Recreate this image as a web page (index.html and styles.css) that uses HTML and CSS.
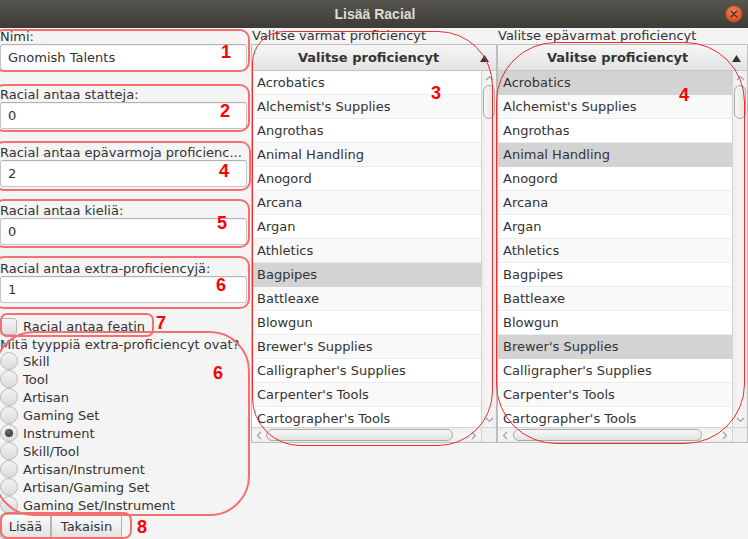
FILE: index.html
```html
<!DOCTYPE html>
<html lang="fi">
<head>
<meta charset="utf-8">
<title>Lisää Racial</title>
<link rel="stylesheet" href="styles.css">
</head>
<body>
<div class="window">
  <header class="titlebar">
    <span></span>
    <span class="title">Lisää Racial</span>
    <span class="close">
      <svg width="18" height="18" viewBox="0 0 18 18">
        <defs>
          <radialGradient id="cg" cx="45%" cy="35%" r="65%">
            <stop offset="0" stop-color="#f5865c"/>
            <stop offset="1" stop-color="#d2471d"/>
          </radialGradient>
        </defs>
        <circle cx="9" cy="9" r="8.5" fill="url(#cg)" stroke="#8a3a1c" stroke-width="0.6"/>
        <path d="M6.3 6.3 L11.7 11.7 M11.7 6.3 L6.3 11.7" stroke="#3a2a22" stroke-width="1.3" stroke-linecap="round"/>
      </svg>
    </span>
  </header>
  <main class="content">
    <section class="left">
      <div class="group"><div class="lbl">Nimi:</div><div class="field">Gnomish Talents</div></div>
      <div class="group"><div class="lbl">Racial antaa statteja:</div><div class="field">0</div></div>
      <div class="group"><div class="lbl">Racial antaa epävarmoja proficienc...</div><div class="field">2</div></div>
      <div class="group"><div class="lbl">Racial antaa kieliä:</div><div class="field">0</div></div>
      <div class="group last"><div class="lbl">Racial antaa extra-proficiencyjä:</div><div class="field">1</div></div>
      <div class="check"><span class="cbox"></span><span>Racial antaa featin</span></div>
      <div class="lbl q">Mitä tyyppiä extra-proficiencyt ovat?</div>
      <div class="radios">
        <div class="radio"><span class="rc"></span>Skill</div>
        <div class="radio"><span class="rc"></span>Tool</div>
        <div class="radio"><span class="rc"></span>Artisan</div>
        <div class="radio"><span class="rc"></span>Gaming Set</div>
        <div class="radio"><span class="rc on"><span class="dot"></span></span>Instrument</div>
        <div class="radio"><span class="rc"></span>Skill/Tool</div>
        <div class="radio"><span class="rc"></span>Artisan/Instrument</div>
        <div class="radio"><span class="rc"></span>Artisan/Gaming Set</div>
        <div class="radio"><span class="rc"></span>Gaming Set/Instrument</div>
      </div>
      <div class="buttons"><button class="btn b1">Lisää</button><button class="btn b2">Takaisin</button></div>
    </section>

    <section class="col mid">
      <div class="clabel">Valitse varmat proficiencyt</div>
      <div class="table">
        <div class="thead"><span class="htext">Valitse proficiencyt</span><svg class="sort" width="9" height="7" viewBox="0 0 9 7"><path d="M0 7 L4.5 0 L9 7 Z" fill="#333"/></svg></div>
        <div class="tbody">
          <div class="rows">
            <div class="row">Acrobatics</div>
            <div class="row">Alchemist's Supplies</div>
            <div class="row">Angrothas</div>
            <div class="row">Animal Handling</div>
            <div class="row">Anogord</div>
            <div class="row">Arcana</div>
            <div class="row">Argan</div>
            <div class="row">Athletics</div>
            <div class="row sel">Bagpipes</div>
            <div class="row">Battleaxe</div>
            <div class="row">Blowgun</div>
            <div class="row">Brewer's Supplies</div>
            <div class="row">Calligrapher's Supplies</div>
            <div class="row">Carpenter's Tools</div>
            <div class="row">Cartographer's Tools</div>
          </div>
          <div class="vscroll">
            <div class="sbtn"><svg width="9" height="6" viewBox="0 0 9 6"><polyline points="1,5 4.5,1.5 8,5" fill="none" stroke="#a0a0a0" stroke-width="1.2"/></svg></div>
            <div class="vtrack"><div class="vthumb"></div></div>
            <div class="sbtn"><svg width="9" height="6" viewBox="0 0 9 6"><polyline points="1,1 4.5,4.5 8,1" fill="none" stroke="#a0a0a0" stroke-width="1.2"/></svg></div>
          </div>
        </div>
        <div class="hscroll">
          <div class="hbtn"><svg width="6" height="9" viewBox="0 0 6 9"><polyline points="5,1 1.5,4.5 5,8" fill="none" stroke="#a0a0a0" stroke-width="1.2"/></svg></div>
          <div class="htrack"><div class="hthumb t-mid"></div></div>
          <div class="hbtn"><svg width="6" height="9" viewBox="0 0 6 9"><polyline points="1,1 4.5,4.5 1,8" fill="none" stroke="#a0a0a0" stroke-width="1.2"/></svg></div>
          <div class="corner"></div>
        </div>
      </div>
    </section>

    <section class="col rgt">
      <div class="clabel">Valitse epävarmat proficiencyt</div>
      <div class="table">
        <div class="thead"><span class="htext">Valitse proficiencyt</span><svg class="sort" width="9" height="7" viewBox="0 0 9 7"><path d="M0 7 L4.5 0 L9 7 Z" fill="#333"/></svg></div>
        <div class="tbody">
          <div class="rows">
            <div class="row sel">Acrobatics</div>
            <div class="row">Alchemist's Supplies</div>
            <div class="row">Angrothas</div>
            <div class="row sel">Animal Handling</div>
            <div class="row">Anogord</div>
            <div class="row">Arcana</div>
            <div class="row">Argan</div>
            <div class="row">Athletics</div>
            <div class="row">Bagpipes</div>
            <div class="row">Battleaxe</div>
            <div class="row">Blowgun</div>
            <div class="row sel">Brewer's Supplies</div>
            <div class="row">Calligrapher's Supplies</div>
            <div class="row">Carpenter's Tools</div>
            <div class="row">Cartographer's Tools</div>
          </div>
          <div class="vscroll">
            <div class="sbtn"><svg width="9" height="6" viewBox="0 0 9 6"><polyline points="1,5 4.5,1.5 8,5" fill="none" stroke="#a0a0a0" stroke-width="1.2"/></svg></div>
            <div class="vtrack"><div class="vthumb"></div></div>
            <div class="sbtn"><svg width="9" height="6" viewBox="0 0 9 6"><polyline points="1,1 4.5,4.5 8,1" fill="none" stroke="#a0a0a0" stroke-width="1.2"/></svg></div>
          </div>
        </div>
        <div class="hscroll">
          <div class="hbtn"><svg width="6" height="9" viewBox="0 0 6 9"><polyline points="5,1 1.5,4.5 5,8" fill="none" stroke="#a0a0a0" stroke-width="1.2"/></svg></div>
          <div class="htrack"><div class="hthumb t-rgt"></div></div>
          <div class="hbtn"><svg width="6" height="9" viewBox="0 0 6 9"><polyline points="1,1 4.5,4.5 1,8" fill="none" stroke="#a0a0a0" stroke-width="1.2"/></svg></div>
          <div class="corner"></div>
        </div>
      </div>
    </section>
  </main>

  <div class="ann a1"></div>
  <div class="ann a2"></div>
  <div class="ann a4l"></div>
  <div class="ann a5"></div>
  <div class="ann a6f"></div>
  <div class="ann a7"></div>
  <div class="ann a6r"></div>
  <div class="ann a8"></div>
  <div class="ann thin a3"></div>
  <div class="ann thin a4r"></div>

  <span class="num n1">1</span>
  <span class="num n2">2</span>
  <span class="num n4l">4</span>
  <span class="num n5">5</span>
  <span class="num n6a">6</span>
  <span class="num n7">7</span>
  <span class="num n6b">6</span>
  <span class="num n8">8</span>
  <span class="num n3">3</span>
  <span class="num n4r">4</span>
</div>
</body>
</html>
```
FILE: styles.css
```css
* { box-sizing: border-box; }
html, body { margin: 0; padding: 0; }
body {
  width: 748px;
  height: 539px;
  overflow: hidden;
  background: #f4f4f4;
  font-family: "DejaVu Sans", sans-serif;
  font-size: 13px;
  color: #333;
}
.window { position: relative; width: 748px; height: 539px; overflow: hidden; background: #f4f4f4; }

/* title bar */
.titlebar {
  height: 28px;
  background: linear-gradient(#57554f, #3c3b37);
  display: grid;
  grid-template-columns: 1fr auto 1fr;
  align-items: center;
}
.title {
  font-family: "Liberation Sans", sans-serif;
  font-weight: bold;
  font-size: 14px;
  color: #dfdbd2;
  padding-left: 2px;
}
.close { justify-self: end; margin-right: 5px; width: 18px; height: 18px; display: block; }
.close svg { display: block; }

/* content */
.content { display: flex; height: 511px; }

.left { width: 247px; margin-right: 4px; padding-top: 1px; display: flex; flex-direction: column; }
.group { display: flex; flex-direction: column; margin-bottom: 16px; }
.group.last { margin-bottom: 13px; }
.lbl { height: 15px; line-height: 15px; white-space: nowrap; overflow: hidden; }
.field {
  height: 27px;
  line-height: 25px;
  background: #fff;
  border: 1px solid #c4c4c4;
  border-top-color: #b2b2b2;
  border-radius: 3px;
  padding-left: 7px;
  box-shadow: inset 0 1px 1px rgba(0,0,0,0.05);
}

.check { height: 20px; display: flex; align-items: center; gap: 6px; }
.cbox {
  width: 17px; height: 17px;
  border: 1px solid #b6b6b6;
  border-radius: 3px;
  background: linear-gradient(#f4f4f4, #dedede);
}
.q { margin-top: 1px; }

.radios { display: flex; flex-direction: column; }
.radio { height: 18px; display: flex; align-items: center; gap: 5px; white-space: nowrap; }
.rc {
  width: 18px; height: 18px;
  border-radius: 50%;
  border: 1px solid #bcbcbc;
  background: linear-gradient(#f2f2f2, #dcdcdc);
  display: flex; align-items: center; justify-content: center;
  flex: none;
}
.dot { width: 8px; height: 8px; border-radius: 50%; background: radial-gradient(circle at 40% 35%, #6a6a6a, #2e2e2e); }

.buttons { display: flex; height: 25px; }
.btn {
  font-family: "DejaVu Sans", sans-serif;
  font-size: 13px;
  color: #333;
  height: 25px;
  padding: 0;
  border: 1px solid #b4b4b4;
  border-radius: 3px;
  background: linear-gradient(#fafafa, #e2e2e2);
  box-shadow: inset 0 1px 0 #ffffff;
}
.b1 { width: 51px; }
.b2 { width: 71px; }

/* tables */
.col { display: flex; flex-direction: column; }
.mid { width: 246px; }
.rgt { width: 251px; }
.clabel { height: 16px; line-height: 16px; white-space: nowrap; padding-left: 1px; }
.table {
  height: 399px;
  border: 1px solid #bdbdbd;
  background: #fff;
  display: flex;
  flex-direction: column;
}
.thead {
  height: 26px;
  border-bottom: 1px solid #c6c6c6;
  background: linear-gradient(#f6f6f6, #e3e3e3);
  display: flex;
  align-items: center;
  padding-left: 5px;
  padding-right: 7px;
  font-weight: bold;
}
.rgt .thead { padding-right: 6px; }
.htext { flex: 1; text-align: center; white-space: nowrap; }
.sort { display: block; margin-top: 1px; }

.tbody { flex: 1; display: flex; min-height: 0; }
.rows { flex: 1; overflow: hidden; }
.row {
  height: 24px;
  line-height: 23px;
  border-bottom: 1px solid #ededed;
  padding-left: 5px;
  white-space: nowrap;
  background: #fff;
}
.row:nth-child(even) { background: #f9f9f9; }
.row.sel { background: #d3d3d3; border-bottom-color: #d3d3d3; }

.vscroll {
  width: 15px;
  border-left: 1px solid #d4d4d4;
  background: linear-gradient(to right, #ededed, #f6f6f6 50%, #ededed);
  display: flex;
  flex-direction: column;
}
.sbtn { height: 14px; display: flex; align-items: center; justify-content: center; }
.sbtn svg { display: block; }
.vtrack { flex: 1; padding: 0 1px 0 1px; }
.vthumb {
  height: 34px;
  border: 1px solid #aaaaaa;
  border-radius: 6px;
  background: linear-gradient(to right, #f7f7f7, #e4e4e4);
}

.hscroll {
  height: 15px;
  border-top: 1px solid #d4d4d4;
  background: linear-gradient(#ededed, #f6f6f6 50%, #ededed);
  display: flex;
}
.hbtn { width: 14px; display: flex; align-items: center; justify-content: center; }
.hbtn svg { display: block; }
.htrack { flex: 1; padding-top: 1px; }
.hthumb {
  height: 12px;
  border: 1px solid #aaaaaa;
  border-radius: 6px;
  background: linear-gradient(#f7f7f7, #e4e4e4);
}
.t-mid { width: 187px; }
.t-rgt { width: 189px; margin-left: 1px; }
.corner { width: 15px; background: #f0f0f0; border-left: 1px solid #d4d4d4; }

/* red annotations drawn over the screenshot */
.ann {
  position: absolute;
  border: 2px solid #f47070;
  border-radius: 10px;
  pointer-events: none;
}
.a1 { left: -6px; top: 29px; width: 256px; height: 43px; }
.a2 { left: -6px; top: 84px; width: 256px; height: 48px; }
.a4l { left: -6px; top: 141px; width: 257px; height: 50px; }
.a5 { left: -6px; top: 199px; width: 256px; height: 49px; }
.a6f { left: -6px; top: 256px; width: 256px; height: 53px; }
.a7 { left: 0; top: 313px; width: 154px; height: 24px; border-radius: 7px; }
.a6r { left: -6px; top: 331px; width: 256px; height: 185px; border-radius: 40px; }
.a8 { left: 0; top: 512px; width: 132px; height: 27px; border-radius: 8px; }
.ann.thin { border: 1.5px solid #f42a2a; }
.a3 { left: 252px; top: 31px; width: 241px; height: 415px; border-radius: 32px 55px 55px 48px; }
.a4r { left: 496px; top: 42px; width: 249px; height: 402px; border-radius: 60px; }

.num {
  position: absolute;
  font-family: "Liberation Sans", sans-serif;
  font-weight: bold;
  font-size: 18px;
  line-height: 18px;
  color: #ff0000;
}
.n1 { left: 221px; top: 43px; }
.n2 { left: 220px; top: 102px; }
.n4l { left: 219px; top: 162px; }
.n5 { left: 217px; top: 214px; }
.n6a { left: 216px; top: 276px; }
.n7 { left: 156px; top: 314px; }
.n6b { left: 213px; top: 364px; }
.n8 { left: 137px; top: 518px; }
.n3 { left: 431px; top: 84px; }
.n4r { left: 679px; top: 86px; }
```
